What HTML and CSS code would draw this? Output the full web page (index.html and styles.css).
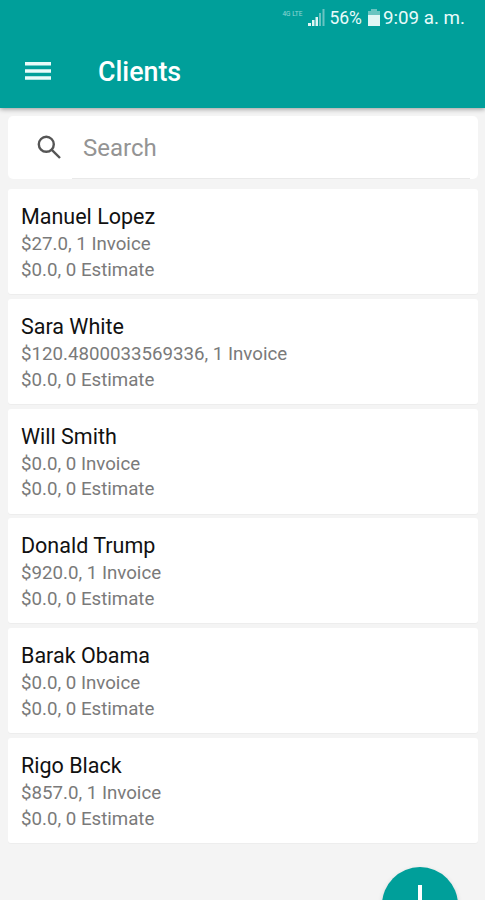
FILE: index.html
```
<!DOCTYPE html>
<html lang="en">
<head>
    <meta charset="UTF-8">
    <meta name="viewport" content="width=device-width, initial-scale=1.0">
    <title>Clients</title>
    <link rel="stylesheet" href="styles.css">
</head>
<body>
    <header class="app-header">
        <div class="status-bar">
            <span class="carrier">4G LTE</span>
            <svg class="signal" width="17" height="17" viewBox="0 0 17 17">
                <path class="on" d="M0 14h3v3H0zM4 11h2.500v6H4zM7.500 8H10v9H7.500z"/>
                <path class="off" d="M11 4h2v13h-2zM14.500 0h2v17h-2z"/>
            </svg>
            <span class="battery-level">56%</span>
            <svg class="battery" width="12" height="17" viewBox="0 0 12 17">
                <path class="off" d="M3 0h6v2h3v5H0V2h3z"/>
                <path class="on" d="M0 6h12v11H0z"/>
            </svg>
            <span class="clock">9:09 a. m.</span>
        </div>
        <div class="toolbar">
            <button class="menu-button" aria-label="Menu">
                <svg width="26" height="20" viewBox="0 0 26 20">
                    <path d="M0 0h26v3.500H0zM0 7.200h26v3.500H0zM0 14.300h26v3.500H0z"/>
                </svg>
            </button>
            <h1>Clients</h1>
        </div>
    </header>
    <main>
        <label class="search-box">
            <svg class="search-icon" width="25" height="25" viewBox="0 0 25 25">
                <circle cx="9.300" cy="9.300" r="7.500"/>
                <path d="M14.800 14.800L23 23"/>
            </svg>
            <input type="text" placeholder="Search">
        </label>
        <ul class="client-list">
            <li class="client">
                <h2>Manuel Lopez</h2>
                <p>$27.0, 1 Invoice</p>
                <p>$0.0, 0 Estimate</p>
            </li>
            <li class="client">
                <h2>Sara White</h2>
                <p>$120.4800033569336, 1 Invoice</p>
                <p>$0.0, 0 Estimate</p>
            </li>
            <li class="client">
                <h2>Will Smith</h2>
                <p>$0.0, 0 Invoice</p>
                <p>$0.0, 0 Estimate</p>
            </li>
            <li class="client">
                <h2>Donald Trump</h2>
                <p>$920.0, 1 Invoice</p>
                <p>$0.0, 0 Estimate</p>
            </li>
            <li class="client">
                <h2>Barak Obama</h2>
                <p>$0.0, 0 Invoice</p>
                <p>$0.0, 0 Estimate</p>
            </li>
            <li class="client">
                <h2>Rigo Black</h2>
                <p>$857.0, 1 Invoice</p>
                <p>$0.0, 0 Estimate</p>
            </li>
        </ul>
    </main>
    <button class="add-button" aria-label="Add client">
        <svg width="40" height="40" viewBox="0 0 40 40">
            <path d="M18 0h4v18h18v4H22v18h-4V22H0v-4h18z"/>
        </svg>
    </button>
</body>
</html>
```
FILE: styles.css
```
* {
    box-sizing: border-box;
}
body {
    position: relative;
    height: 900px;
    margin: 0;
    overflow: hidden;
    background-color: #f4f4f4;
    font-family: Roboto, sans-serif;
}
h1, h2, p, ul {
    margin: 0;
    padding: 0;
}
button {
    padding: 0;
    border: none;
    background: none;
}
svg {
    display: block;
    flex: none;
}
.app-header {
    height: 108px;
    background-color: #009f9a;
    box-shadow: 0 1px 5px rgba(0, 0, 0, 0.4);
    color: #e9fbfa;
}
.status-bar {
    display: flex;
    justify-content: flex-end;
    align-items: center;
    height: 35px;
    padding-right: 20px;
}
.carrier {
    margin: -8px 6px 0 0;
    font-size: 6.500px;
    opacity: 0.6;
    white-space: nowrap;
}
.on {
    fill: #e0f6f5;
}
.off {
    fill: #69c4c1;
}
.battery-level {
    margin: 0 6px 0 4px;
    font-size: 17.500px;
}
.clock {
    margin-left: 3px;
    font-size: 18.800px;
}
.toolbar {
    display: flex;
    align-items: center;
    height: 74px;
    padding-left: 25px;
}
.menu-button {
    fill: #e9fbfa;
}
.toolbar h1 {
    margin-left: 47px;
    color: #fff;
    font-size: 26.800px;
    font-weight: 500;
}
main {
    padding: 8px 7px 0 8px;
}
.search-box {
    display: flex;
    align-items: center;
    height: 63px;
    padding-left: 29px;
    border-radius: 5px;
    background: linear-gradient(#e9e9e9, #e9e9e9) 64px 100% / 398px 1px no-repeat #fff;
}
.search-icon {
    fill: none;
    stroke: #555;
    stroke-width: 2.4;
}
.search-box input {
    width: 300px;
    margin-left: 21px;
    padding: 0;
    border: none;
    outline: none;
    font: 24px Roboto, sans-serif;
}
.search-box input::placeholder {
    color: #949494;
}
.client-list {
    display: flex;
    flex-direction: column;
    gap: 4.800px;
    margin-top: 10px;
    list-style: none;
}
.client {
    height: 105px;
    padding: 14px 13px;
    border-radius: 3px;
    background-color: #fff;
    box-shadow: 0 1px 1px rgba(0, 0, 0, 0.03);
}
.client h2 {
    margin-bottom: 2px;
    color: #111;
    font-size: 21.500px;
    font-weight: 400;
    line-height: 27px;
}
.client p {
    color: #7a7a7a;
    font-size: 18.700px;
    line-height: 25.700px;
}
.add-button {
    position: absolute;
    top: 867px;
    left: 382px;
    display: flex;
    align-items: center;
    justify-content: center;
    width: 76px;
    height: 76px;
    border-radius: 50%;
    background-color: #009f9a;
    box-shadow: 0 2px 5px rgba(0, 0, 0, 0.15);
    fill: #fff;
}
```
